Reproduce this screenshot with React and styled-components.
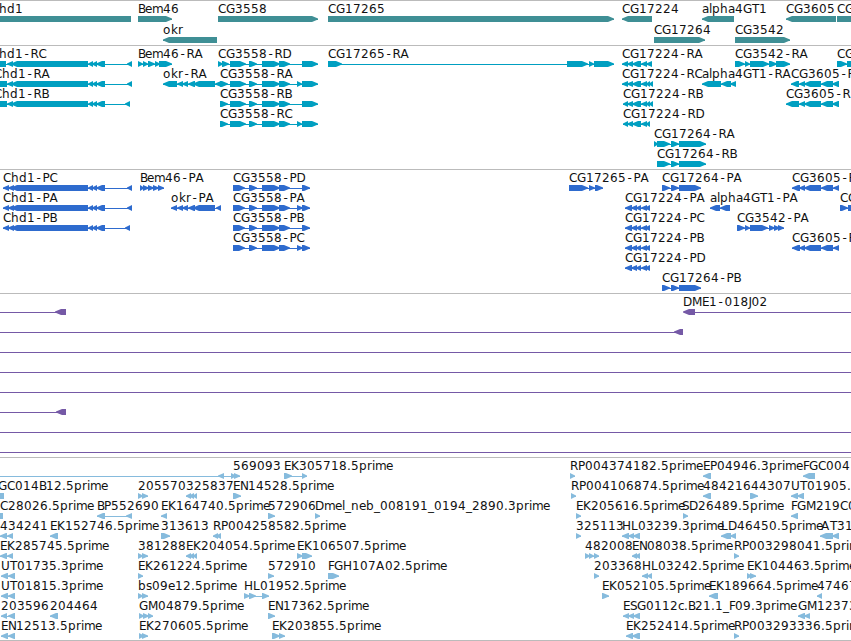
import React from 'react';
import styled, { createGlobalStyle } from 'styled-components';

const GlobalStyle = createGlobalStyle`
  body {
    margin: 0;
    background: #ffffff;
  }
`
const Viewer = styled.main`
  width: 851px;
  height: 641px;
  display: flex;
  flex-direction: column;
  overflow: hidden;
  background: #ffffff;
`
const StyledTrack = styled.section`
  box-sizing: border-box;
  flex: none;
  height: ${({ $height }) => $height}px;
  border-top: 1px solid #bbbbbb;
  color: ${({ $color }) => $color};
`
const StyledRow = styled.svg`
  display: block;
  width: 851px;
  height: ${({ $height }) => $height}px;
  overflow: visible;
  fill: currentColor;
`
const StyledLabel = styled.text`
  font-family: 'DejaVu Sans', sans-serif;
  font-size: 12px;
  fill: #111111;
`
const BottomRule = styled.div`
  flex: none;
  height: 1px;
  background: #bbbbbb;
`

// whole pixel glyph advances, digits and everything unlisted take 8
const ADVANCES = {
  '-': 7.5, '.': 4, _: 6,
  A: 9, B: 7, D: 9, E: 7, F: 6, G: 9, H: 9, J: 3, L: 7, M: 10, P: 7, S: 7, T: 7, U: 9,
  a: 7, c: 6, e: 7, i: 3, k: 7, l: 3, m: 11, o: 8, r: 5, s: 6,
};

// the hyphen is narrower than its cell, so it is centred in it
const glyphPositions = (text, start) => {
  let x = start;
  return [...text].map((char) => {
    const current = char === '-' ? x + 1.5 : x;
    x += ADVANCES[char] || 8;
    return current;
  }).join(' ');
}

// feature: [label, label x, direction, exons, line]
const L = 'left';
const R = 'right';

const chd = [[11, 88], [88, 93], [92, 97], [96, 105]];
const cg3558 = [[230, 246], [249, 257], [262, 280], [279, 290]];
const cg3558p = [[233, 245], [249, 257], [262, 280], [279, 290]];
const cg17224 = [[627, 633], [632, 641], [641, 647]];
const cg17224p = [[625, 632], [631, 637], [636, 641], [641, 647], [645, 650]];
const cg3605 = [[799, 805], [804, 821], [821, 833], [832, 839]];
const cg3605p = [[792, 800], [799, 805], [804, 821], [821, 833], [833, 839]];
const cg17264 = [[657, 670], [671, 679], [679, 706]];
const cg17264p = [[662, 670], [671, 679], [679, 701]];
const fullLine = ['', 0, L, [], [0, 851]];

const tracks = [
  {
    name: 'genes', color: '#3f8f95', height: 45, rowHeight: 21,
    rows: [
      [
        ['Chd1', -9, L, [[-9, 131]]],
        ['Bem46', 138, R, [[138, 172]]],
        ['CG3558', 218, R, [[218, 318]]],
        ['CG17265', 328, R, [[328, 614]]],
        ['CG17224', 622, L, [[622, 652]]],
        ['alpha4GT1', 702, L, [[702, 734]]],
        ['CG3605', 786, L, [[786, 836]]],
        ['CG3609', 837, R, [[837, 880]]],
      ],
      [
        ['okr', 163, L, [[163, 217]]],
        ['CG17264', 654, R, [[654, 705]]],
        ['CG3542', 735, R, [[735, 790]]],
      ],
    ],
  },
  {
    name: 'transcripts', color: '#009fc1', height: 124, rowHeight: 20,
    rows: [
      [
        ['Chd1-RC', -9, L, [[-9, 6], [7, 13], ...chd, [127, 132]]],
        ['Bem46-RA', 138, R, [[138, 143], [143, 148], [148, 155], [155, 160], [159, 172]]],
        ['CG3558-RD', 218, R, [[218, 223], [222, 229], ...cg3558, [302, 318]]],
        ['CG17265-RA', 328, R, [[328, 342], [567, 588], [589, 594], [594, 614]]],
        ['CG17224-RA', 622, L, [[622, 628], ...cg17224, [646, 652]]],
        ['CG3542-RA', 735, R, [[735, 745], [745, 750], [750, 769], [769, 777], [776, 790]]],
        ['CG3609-RA', 837, R, [[837, 847], [847, 870]]],
      ],
      [
        ['Chd1-RA', -6, L, [[-6, 7], [7, 13], ...chd, [127, 132]]],
        ['okr-RA', 163, L, [[163, 177], [177, 183], [182, 188], [188, 195], [193, 215], [215, 222]]],
        ['CG3558-RA', 220, R, [[220, 228], ...cg3558, [297, 302], [302, 318]]],
        ['CG17224-RC', 622, L, [[622, 628], ...cg17224, [646, 650], [649, 653]]],
        ['alpha4GT1-RA', 702, L, [[702, 721], [721, 731], [730, 736]]],
        ['CG3605-RA', 791, L, [[791, 799], ...cg3605]],
      ],
      [
        ['Chd1-RB', -6, L, [[-6, 7], [7, 13], ...chd, [125, 130]]],
        ['CG3558-RB', 220, R, [[220, 228], ...cg3558, [302, 318]]],
        ['CG17224-RB', 623, L, [[623, 628], ...cg17224, [646, 650], [649, 653]]],
        ['CG3605-RB', 786, L, [[786, 799], ...cg3605]],
      ],
      [
        ['CG3558-RC', 220, R, [[220, 228], ...cg3558, [297, 302], [302, 318]]],
        ['CG17224-RD', 623, L, [[623, 628], ...cg17224, [646, 650]]],
      ],
      [['CG17264-RA', 654, R, [[654, 658], ...cg17264]]],
      [['CG17264-RB', 657, R, cg17264]],
    ],
  },
  {
    name: 'proteins', color: '#2e6bce', height: 124, rowHeight: 20,
    rows: [
      [
        ['Chd1-PC', 3, L, [[3, 9], [8, 14], ...chd, [127, 132]]],
        ['Bem46-PA', 140, R, [[140, 144], [143, 149], [148, 154], [153, 159], [158, 164]]],
        ['CG3558-PD', 233, R, [...cg3558p, [302, 310]]],
        ['CG17265-PA', 569, R, [[569, 588], [589, 595], [595, 603]]],
        ['CG17264-PA', 662, R, cg17264p],
        ['CG3605-PA', 792, L, cg3605p],
      ],
      [
        ['Chd1-PA', 3, L, [[3, 9], [8, 14], ...chd, [127, 132]]],
        ['okr-PA', 171, L, [[171, 177], [177, 183], [182, 188], [188, 195], [193, 215], [216, 221]]],
        ['CG3558-PA', 233, R, [...cg3558p, [297, 303], [302, 310]]],
        ['CG17224-PA', 625, L, cg17224p],
        ['alpha4GT1-PA', 710, L, [[710, 720], [720, 730]]],
        ['CG3609-PA', 840, R, [[840, 848], [848, 870]]],
      ],
      [
        ['Chd1-PB', 3, L, [[3, 9], [8, 14], ...chd, [125, 130]]],
        ['CG3558-PB', 233, R, [...cg3558p, [302, 310]]],
        ['CG17224-PC', 625, L, cg17224p],
        ['CG3542-PA', 737, R, [[737, 745], [745, 750], [750, 768], [769, 775], [774, 780], [778, 784]]],
      ],
      [
        ['CG3558-PC', 233, R, [...cg3558p, [297, 303], [302, 310]]],
        ['CG17224-PB', 625, L, cg17224p],
        ['CG3605-PB', 792, L, cg3605p],
      ],
      [['CG17224-PD', 625, L, cg17224p]],
      [['CG17264-PB', 662, R, cg17264p]],
    ],
  },
  {
    name: 'clones', color: '#7559a6', height: 164, rowHeight: 20,
    rows: [
      [
        ['', 0, L, [[55, 66]], [0, 56]],
        ['DME1-018J02', 683, L, [[683, 695]], [695, 851]],
      ],
      [['', 0, L, [[674, 683]], [0, 676]]],
      [fullLine],
      [fullLine],
      [fullLine],
      [['', 0, L, [[56, 66]], [0, 57]]],
      [fullLine],
      [fullLine],
    ],
  },
  {
    name: 'ests', color: '#86bbdd', height: 183, rowHeight: 20,
    rows: [
      [
        ['', 0, L, [[218, 224]], [0, 231]],
        ['569093', 233, R, [[231, 236], [234, 240]]],
        ['EK305718.5prime', 284, R, [[284, 292], [302, 307]]],
        ['RP004374182.5prime', 570, R, [[570, 575]]],
        ['EP04946.3prime', 703, L, [[703, 711]]],
        ['FGC004', 803, L, [[803, 815]]],
      ],
      [
        ['FGC014B12.5prime', -8, L, [[-8, 4]]],
        ['205570', 138, R, [[138, 143], [142, 148]]],
        ['325837', 186, L, [[186, 191], [189, 194], [193, 197]]],
        ['EN14528.5prime', 233, R, [[233, 241]]],
        ['RP004106874.5prime', 571, R, [[571, 576]]],
        ['484216', 703, L, [[703, 711]]],
        ['44307', 751, R, [[750, 758]]],
        ['UT01905.5prime', 791, L, [[791, 798], [797, 804]]],
      ],
      [
        ['C28026.5prime', 0, L, [[-8, 3]]],
        ['BP552690', 97, L, [[97, 105], [126, 132]]],
        ['EK164740.5prime', 161, L, [[161, 167]]],
        ['572906', 268, R, [[268, 275]]],
        ['Dmel_neb_008191_0194_2890.3prime', 315, R, [[315, 320]]],
        ['EK205616.5prime', 576, R, [[576, 581]]],
        ['SD26489.5prime', 682, R, [[683, 688]]],
        ['FGM219C02.5prime', 791, L, [[791, 798]]],
      ],
      [
        ['434241', 0, L, [[0, 7], [7, 13]]],
        ['EK152746.5prime', 50, L, [[50, 58]]],
        ['313613', 161, R, [[161, 170]]],
        ['RP004258582.5prime', 213, L, [[213, 218], [216, 221]]],
        ['325113', 576, R, [[576, 581]]],
        ['HL03239.3prime', 622, L, [[622, 629], [628, 634], [633, 640]]],
        ['LD46450.5prime', 721, L, [[721, 731], [730, 736]]],
        ['AT31', 821, L, [[820, 833], [832, 839]]],
      ],
      [
        ['EK285745.5prime', 0, L, [[0, 7], [7, 13]]],
        ['381288', 138, R, [[138, 143], [142, 148]]],
        ['EK204054.5prime', 186, L, [[186, 191], [189, 194], [193, 197]]],
        ['EK106507.5prime', 297, R, [[297, 303], [302, 312]]],
        ['482008', 585, R, [[585, 590], [589, 594], [594, 599]]],
        ['EN08038.5prime', 632, L, [[632, 637], [635, 640]]],
        ['RP003298041.5prime', 734, R, [[734, 739]]],
      ],
      [
        ['UT01735.3prime', 1, L, [[1, 8], [8, 15]]],
        ['EK261224.5prime', 138, R, [[138, 143]]],
        ['572910', 268, R, [[268, 274]]],
        ['FGH107A02.5prime', 328, R, [[328, 339]]],
        ['203368', 594, R, [[594, 599]]],
        ['HL03242.5prime', 642, L, [[642, 648], [647, 652]]],
        ['EK104463.5prime', 747, R, [[747, 752], [750, 756]]],
      ],
      [
        ['UT01815.3prime', 1, L, [[1, 8], [8, 15]]],
        ['bs09e12.5prime', 138, R, [[138, 143], [142, 148]]],
        ['HL01952.5prime', 244, R, [[244, 250], [249, 256], [262, 269]]],
        ['EK052105.5prime', 602, R, [[602, 609]]],
        ['EK189664.5prime', 709, L, [[709, 718]]],
        ['474671', 817, L, [[817, 822]]],
      ],
      [
        ['203596', 1, L, [[1, 7], [8, 15]]],
        ['204464', 50, L, [[50, 58]]],
        ['GM04879.5prime', 139, R, [[139, 144], [143, 149], [148, 153]]],
        ['EN17362.5prime', 268, R, [[268, 275]]],
        ['ESG0112c.B21.1_F09.3prime', 623, L, [[623, 629], [628, 634], [633, 640]]],
        ['GM12373', 798, L, [[798, 805], [804, 810]]],
      ],
      [
        ['EN12513.5prime', 1, L, [[1, 8], [8, 15]]],
        ['EK270605.5prime', 139, R, [[139, 144], [142, 148]]],
        ['EK203855.5prime', 272, R, [[272, 280], [279, 285]]],
        ['EK252414.5prime', 626, L, [[626, 633], [632, 640]]],
        ['RP003293336.5prime', 734, R, [[734, 739]]],
      ],
    ],
  },
];

const Exon = ({ start, end, direction }) => {
  const head = Math.min(6, end - start);
  const points = direction === L
    ? `${end},15 ${start + head},15 ${start},17.5 ${start},18.5 ${start + head},21 ${end},21`
    : `${start},15 ${end - head},15 ${end},17.5 ${end},18.5 ${end - head},21 ${start},21`;
  return <polygon points={points}/>;
}

const Feature = ({ feature }) => {
  const [label, x, direction, exons, span] = feature;
  const [from, to] = span || [exons[0][0], exons[exons.length - 1][1]];
  return (
    <g>
      <rect x={from} y="18" width={to - from} height="1"/>
      {exons.map(([start, end]) => (
        <Exon key={start} start={start} end={end} direction={direction}/>
      ))}
      {label && <StyledLabel x={glyphPositions(label, x)} y="12">{label}</StyledLabel>}
    </g>
  );
}

const Track = ({ track }) => (
  <StyledTrack $height={track.height} $color={track.color}>
    {track.rows.map((row, i) => (
      <StyledRow key={i} $height={track.rowHeight}>
        {row.map((feature, j) => <Feature key={j} feature={feature}/>)}
      </StyledRow>
    ))}
  </StyledTrack>
)

const App = () => (
  <>
    <GlobalStyle/>
    <Viewer>
      {tracks.map(track => <Track key={track.name} track={track}/>)}
      <BottomRule/>
    </Viewer>
  </>
)

export default App;
